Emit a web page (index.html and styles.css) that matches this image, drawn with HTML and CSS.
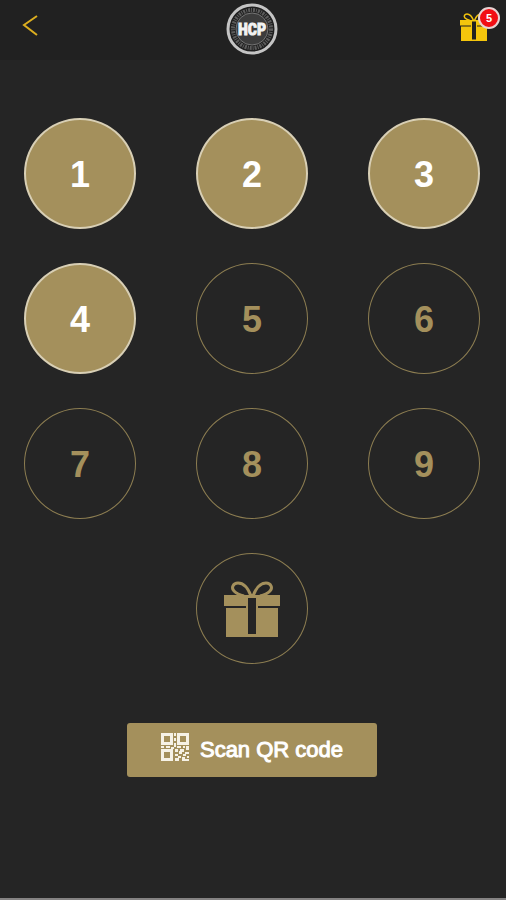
FILE: index.html
```
<!DOCTYPE html>
<html lang="en">
<head>
    <meta charset="UTF-8">
    <meta name="viewport" content="width=device-width, initial-scale=1.0">
    <title>HCP - Stamp card</title>
    <link rel="stylesheet" href="styles.css">
</head>
<body>
    <!-- gift icon, used in the header and in the last stamp -->
    <svg class="sprite" aria-hidden="true">
        <symbol id="gift" viewBox="0 0 56 56">
            <path d="M27 15C24 7 19 2 14 2C9 2 7 7 10 10C13 13 16 14 20 15M29 15C32 7 37 2 42 2C47 2 49 7 46 10C43 13 40 14 36 15" fill="none" stroke="currentColor" stroke-width="3"/>
            <path fill="currentColor" fill-rule="evenodd" d="M0 14H56V25H34V27H54V56H2V27H22V25H0ZM24 17V53H32V17Z"/>
        </symbol>
    </svg>

    <header class="header">
        <a class="back" href="#" aria-label="Back">
            <svg width="18" height="24" viewBox="0 0 18 24" aria-hidden="true">
                <path d="M15 3L2 12L15 22" fill="none" stroke="currentColor" stroke-width="2"/>
            </svg>
        </a>
        <svg class="logo" viewBox="0 0 52 52" role="img" aria-label="HCP">
            <circle cx="26" cy="26" r="24" fill="#1f1f1f" stroke="#c4c4c4" stroke-width="3"/>
            <circle cx="26" cy="26" r="19" fill="none" stroke="#5c5c5c" stroke-width="4" stroke-dasharray="2 1 1 1"/>
            <circle cx="26" cy="26" r="16" fill="#3c3c3c" stroke="#757575"/>
            <text class="logo-text" x="26" y="32" text-anchor="middle">HCP</text>
        </svg>
        <a class="gifts" href="#" aria-label="Gifts">
            <svg class="gifts-icon" aria-hidden="true"><use href="#gift"/></svg>
            <span class="badge">5</span>
        </a>
    </header>

    <main>
        <div class="stamps">
            <button class="stamp collected" type="button">1</button>
            <button class="stamp collected" type="button">2</button>
            <button class="stamp collected" type="button">3</button>
            <button class="stamp collected" type="button">4</button>
            <button class="stamp" type="button">5</button>
            <button class="stamp" type="button">6</button>
            <button class="stamp" type="button">7</button>
            <button class="stamp" type="button">8</button>
            <button class="stamp" type="button">9</button>
            <button class="stamp reward" type="button" aria-label="Reward">
                <svg class="reward-icon" aria-hidden="true"><use href="#gift"/></svg>
            </button>
        </div>

        <button class="scan" type="button">
            <svg class="qr" viewBox="0 0 28 28" aria-hidden="true">
                <path fill="currentColor" fill-rule="evenodd" d="M0 0H12V12H0ZM3 3V9H9V3ZM16 0H28V12H16ZM19 3V9H25V3ZM0 16H12V28H0ZM3 19V25H9V19Z"/>
                <path fill="currentColor" d="M13 0H15V3H13ZM13 5H15V8H13ZM13 10H15V14H13ZM0 13H3V15H0ZM5 13H9V15H5ZM10 14H13V16H10ZM16 13H20V15H16ZM22 13H24V15H22ZM25 13H28V17H25ZM14 16H17V19H14ZM19 16H23V19H21V21H18V18H19ZM14 21H17V23H14ZM24 19H28V21H25V23H22V21H24ZM17 23H20V25H18V28H14V25H17ZM21 24H24V26H28V28H21ZM26 23H28V25H26Z"/>
            </svg>
            <span>Scan QR code</span>
        </button>
    </main>
</body>
</html>
```

FILE: styles.css
```
* {
    box-sizing: border-box;
}
body {
    font-family: "Liberation Sans", Arial, sans-serif;
    margin: 0;
    min-height: 100vh;
    background-color: #252525;
    border-bottom: 2px solid #858383;
}
button {
    font-family: inherit;
    cursor: pointer;
}
.sprite {
    position: absolute;
    width: 0;
    height: 0;
}

/* Header */
.header {
    display: grid;
    grid-template-columns: 1fr auto 1fr;
    height: 60px;
    padding: 3px 18px 0 16px;
    background-color: #212121;
}
.back {
    justify-self: start;
    padding: 10px 6px;
    color: #dcae1f;
}
.back svg,
.gifts-icon {
    display: block;
}
.logo {
    width: 52px;
    height: 52px;
}
.logo-text {
    font-family: "Roboto Condensed", "Open Sans Condensed", "DejaVu Sans Condensed", sans-serif;
    font-size: 16px;
    font-weight: bold;
    fill: #f2f2f2;
    stroke: #f2f2f2;
}
.gifts {
    position: relative;
    justify-self: end;
    align-self: start;
    margin-top: 10px;
    color: #f5c60c;
}
.gifts-icon {
    width: 28px;
    height: 28px;
}
.badge {
    position: absolute;
    top: -6px;
    right: -12px;
    width: 22px;
    height: 22px;
    border: 2px solid #e8d3d3;
    border-radius: 50%;
    background-color: #f20d14;
    color: #fff;
    font-size: 11px;
    font-weight: bold;
    line-height: 18px;
    text-align: center;
}

/* Stamps */
main {
    padding: 58px 26px 0 24px;
}
.stamps {
    display: grid;
    grid-template-columns: repeat(3, 112px);
    justify-content: space-between;
    row-gap: 34px;
}
.stamp {
    height: 111px;
    padding: 2px 0 0;
    border: 1px solid #8c7d51;
    border-radius: 50%;
    background: none;
    color: #a4905c;
    font-size: 36px;
    font-weight: bold;
}
.collected {
    border: 2px solid #d8cfb5;
    background-color: #a4905c;
    color: #fff;
}
.reward {
    grid-column: 2;
    padding: 0;
}
.reward-icon {
    display: block;
    width: 56px;
    height: 56px;
    margin: 0 auto;
}

/* Scan button */
.scan {
    display: flex;
    align-items: flex-start;
    justify-content: center;
    gap: 11px;
    width: 55%;
    min-width: 220px;
    margin: 59px auto 0;
    padding: 10px 0;
    border: 0;
    border-radius: 3px;
    background-color: #a4905c;
    color: #fff;
    font-size: 22px;
    line-height: 34px;
    -webkit-text-stroke: 1px #fff;
}
.qr {
    width: 28px;
    height: 28px;
    color: #f6f2e6;
}
```
